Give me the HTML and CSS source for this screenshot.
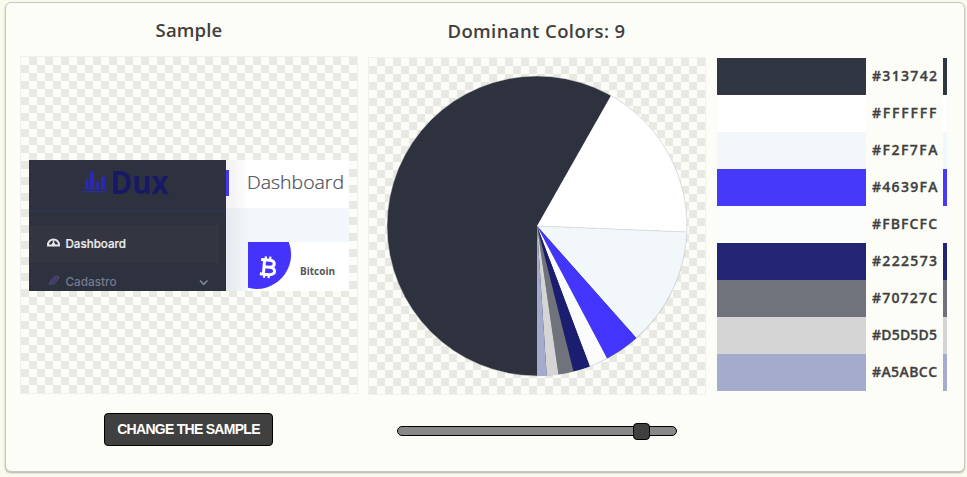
FILE: index.html
```html
<!DOCTYPE html>
<html lang="en">
<head>
<meta charset="utf-8">
<title>Dominant Colors</title>
<link rel="stylesheet" href="styles.css">
</head>
<body>
<main class="panel">
  <section class="column">
    <h2 class="title">Sample</h2>
    <div class="canvas">
      <svg class="shot" width="320" height="131" viewBox="0 0 320 131">
        <defs>
          <linearGradient id="shade"><stop offset="0" stop-color="#555" stop-opacity=".08"/><stop offset="1" stop-color="#555" stop-opacity="0"/></linearGradient>
        </defs>
        <rect width="320" height="131" fill="#fff"/>
        <rect x="197" y="48" width="123" height="34" fill="#f2f7fb"/>
        <rect x="197" y="82" width="22" height="49" fill="#f2f7fb"/>
        <rect x="197" width="24" height="131" fill="url(#shade)"/>
        <rect width="197" height="131" fill="#2d323e"/>
        <rect y="50" width="197" height="1.5" fill="#2d3752"/>
        <rect y="65" width="190" height="38" fill="#333640"/>
        <rect x="197" y="10" width="3" height="26" fill="#4335f5"/>
        <g fill="#2b28b4">
          <rect x="56" y="19" width="3.5" height="10.500"/><rect x="61" y="11.500" width="4" height="18"/>
          <rect x="66.500" y="22" width="4" height="7.500"/><rect x="72" y="16.500" width="4" height="13"/>
          <rect x="53.500" y="31" width="25" height="1.300"/>
        </g>
        <text class="logo" x="81.500" y="33.500" textLength="58" lengthAdjust="spacingAndGlyphs">Dux</text>
        <path d="M19 85.500C18.500 77.500 30.500 77.500 30 85.500Z" fill="none" stroke="#e8e8ea" stroke-width="1.900"/>
        <path d="M24.500 80.500V85" stroke="#e8e8ea" stroke-width="1.500"/>
        <circle cx="24.500" cy="84.500" r="1.800" fill="#e8e8ea"/>
        <text class="nav nav-on" x="36.500" y="88" textLength="60.500" lengthAdjust="spacingAndGlyphs">Dashboard</text>
        <path d="M20 124.500L22 120.500L27 116L30 117.500L25.500 123.500L20 124.500M22 123.500L27.500 118" fill="none" stroke="#554683" stroke-width="1.200"/>
        <text class="nav nav-off" x="36.500" y="125.500" textLength="51" lengthAdjust="spacingAndGlyphs">Cadastro</text>
        <path d="M171 120.500l3.700 3.800 3.700-3.800" fill="none" stroke="#858a9c" stroke-width="1.500"/>
        <text class="heading" x="218" y="29" textLength="97" lengthAdjust="spacingAndGlyphs">Dashboard</text>
        <path d="M219 82H259.800A34.500 34.500 0 0 1 219 127.800Z" fill="#4333fb"/>
        <g transform="translate(238.500 107) rotate(5)" fill="none" stroke="#fff">
          <path d="M-7-7H1.500C8-7 8-.5 2 0M-7 7.500H2C9.500 7.500 9 0 2 0H-3.500M-3.500-7V7.500" stroke-width="3"/>
          <path d="M-2.500-10.500V-7M2-10.500V-7M-2.500 7V11M2 7V11" stroke-width="2.200"/>
        </g>
        <text class="coin" x="271" y="114.500" textLength="35" lengthAdjust="spacingAndGlyphs">Bitcoin</text>
      </svg>
    </div>
    <button class="change">CHANGE THE SAMPLE</button>
  </section>

  <section class="column column-chart">
    <h2 class="title title-chart">Dominant Colors: 9</h2>
    <div class="canvas">
      <svg width="336" height="336" viewBox="369 58 336 336">
        <circle cx="537" cy="226" r="150" fill="#2d323e" stroke="#cfd2d4" stroke-width=".5"/>
        <path d="M537 226L611 95.500A150 150 0 0 1 686.900 232Z" fill="#fff"/>
        <path d="M537 226L686.900 232A150 150 0 0 1 636.300 338Z" fill="#f2f7fa"/>
        <path d="M537 226L686.900 232" stroke="#dfe2e4"/>
        <path d="M537 226L636.300 338A150 150 0 0 1 607 358.200Z" fill="#4335fd"/>
        <path d="M537 226L607 358.200A150 150 0 0 1 589.800 366.400Z" fill="#fbfcfd"/>
        <path d="M537 226L589.800 366.400A150 150 0 0 1 573.500 371.500Z" fill="#1b1d70"/>
        <path d="M537 226L573.500 371.500A150 150 0 0 1 558.500 374.500Z" fill="#70727c"/>
        <path d="M537 226L558.500 374.500A150 150 0 0 1 546.700 375.700Z" fill="#d5d5d5"/>
        <path d="M537 226L546.700 375.700A150 150 0 0 1 537 376Z" fill="#a5abcc"/>
        <path d="M611 95.500A150 150 0 0 1 636.300 338M607 358.200A150 150 0 0 1 589.800 366.400" fill="none" stroke="#dfe1e2" stroke-width=".8"/>
      </svg>
    </div>
    <div class="slider"><span class="thumb"></span></div>
  </section>

  <ul class="palette">
    <li class="swatch c1"><svg class="code" width="77" height="37"><text x="6" y="23" textLength="65">#313742</text></svg></li>
    <li class="swatch c2"><svg class="code" width="77" height="37"><text x="6" y="23" textLength="64.500">#FFFFFF</text></svg></li>
    <li class="swatch c3"><svg class="code" width="77" height="37"><text x="6" y="23" textLength="65.500">#F2F7FA</text></svg></li>
    <li class="swatch c4"><svg class="code" width="77" height="37"><text x="6" y="23" textLength="65.500">#4639FA</text></svg></li>
    <li class="swatch c5"><svg class="code" width="77" height="37"><text x="6" y="23" textLength="65">#FBFCFC</text></svg></li>
    <li class="swatch c6"><svg class="code" width="77" height="37"><text x="6" y="23" textLength="65">#222573</text></svg></li>
    <li class="swatch c7"><svg class="code" width="77" height="37"><text x="6" y="23" textLength="65">#70727C</text></svg></li>
    <li class="swatch c8"><svg class="code" width="77" height="37"><text x="6" y="23" textLength="65">#D5D5D5</text></svg></li>
    <li class="swatch c9"><svg class="code" width="77" height="37"><text x="6" y="23" textLength="65">#A5ABCC</text></svg></li>
  </ul>
</main>
</body>
</html>
```
FILE: styles.css
```css
* { box-sizing: border-box; }
body {
  margin: 0;
  height: 477px;
  padding: 2px 0 0 5px;
  overflow: hidden;
  background: #fafaed;
  color: #404040;
  font-family: "Open Sans", sans-serif;
}
.panel {
  display: flex;
  width: 960px;
  height: 470px;
  padding-left: 14px;
  border: 1px solid #c8c8c4;
  border-radius: 6px;
  background: #fcfdf6;
  box-shadow: 0 1px 2px rgba(0, 0, 0, .3);
}
.column {
  display: flex;
  flex-direction: column;
  align-items: center;
  width: 338px;
  margin-right: 10px;
}
.title {
  height: 53px;
  margin: 0;
  padding-top: 13px;
  font-size: 18.500px;
  font-weight: 600;
  line-height: 27px;
  letter-spacing: .15px;
  white-space: nowrap;
}
.title-chart {
  height: 54px;
  padding: 14px 1px 0 0;
  letter-spacing: .4px;
}
.canvas {
  display: flex;
  align-items: center;
  justify-content: center;
  width: 338px;
  height: 338px;
  border: 1px solid #f0f0ee;
  background: repeating-conic-gradient(#e8e9e2 0 25%, #fcfdf6 0 50%) 0 0 / 16px 16px padding-box;
}
.shot { display: block; }
.logo { font: 700 32px "Open Sans", sans-serif; fill: #181965; }
.nav { font: 500 12px Inter, sans-serif; }
.nav-on { fill: #ededee; stroke: #ededee; stroke-width: .2px; }
.nav-off { fill: #747b8e; }
.heading { font: 300 17.500px "Open Sans", sans-serif; fill: #484d55; stroke: #484d55; stroke-width: .2px; }
.coin { font: 700 11px "Open Sans", sans-serif; fill: #555; }
.change {
  width: 169px;
  height: 33px;
  margin: 19px 1px 0 0;
  padding: 0 0 2px;
  border: 1px solid #000;
  border-radius: 4px;
  background: #404040;
  color: #fff;
  font: bold 14px "Liberation Sans", sans-serif;
  letter-spacing: -.72px;
  white-space: nowrap;
}
.slider {
  display: flex;
  align-items: center;
  width: 280px;
  height: 10px;
  margin-top: 31px;
  border: 1px solid #000;
  border-radius: 5px;
  background: #888;
}
.thumb {
  width: 17px;
  height: 17px;
  flex: none;
  margin: 1px 0 0 235px;
  border: 1px solid #000;
  border-radius: 4px;
  background: #404040;
}
.palette {
  width: 230px;
  margin: 55px 0 0 1px;
  padding: 0;
  list-style: none;
}
.swatch { height: 37px; padding-left: 149px; }
.code { display: block; background: #fcfdf6; }
.code text { font: 600 14px "Open Sans", sans-serif; fill: #404040; stroke: #404040; stroke-width: .3px; }
.c1 { background: #313742; }
.c2 { background: #fff; }
.c3 { background: #f2f7fa; }
.c4 { background: #4639fa; }
.c5 { background: #fbfcfc; }
.c6 { background: #222573; }
.c7 { background: #70727c; }
.c8 { background: #d5d5d5; }
.c9 { background: #a5abcc; }
```
